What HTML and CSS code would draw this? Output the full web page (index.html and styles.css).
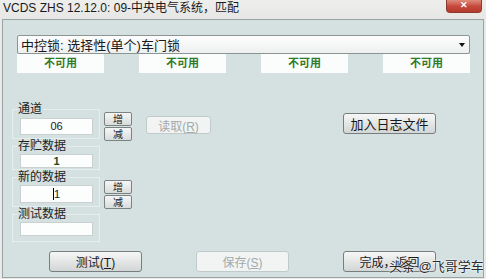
FILE: index.html
```html
<!DOCTYPE html>
<html lang="zh">
<head>
  <meta charset="UTF-8" />
  <title>VCDS ZHS</title>
  <link rel="stylesheet" href="styles.css">
</head>
<body>
  <div id="titleBar">
    <span class="titleText">VCDS ZHS 12.12.0: 09-中央电气系统，匹配</span>
    <div id="closeButton">&#x2715;</div>
  </div>
  <div id="client">
    <div id="combo">
      <span>中控锁: 选择性(单个)车门锁</span>
      <span class="comboArrow"></span>
    </div>
    <div id="statusRow">
      <div class="statusBox">不可用</div>
      <div class="statusBox">不可用</div>
      <div class="statusBox">不可用</div>
      <div class="statusBox">不可用</div>
    </div>

    <div id="middle">
      <div id="groups">
        <fieldset class="group groupChannel">
          <legend>通道</legend>
          <div class="field">06</div>
        </fieldset>
        <fieldset class="group groupStored">
          <legend>存贮数据</legend>
          <div class="field boldValue">1</div>
        </fieldset>
        <fieldset class="group groupNew">
          <legend>新的数据</legend>
          <div class="field"><span class="caret"></span>1</div>
        </fieldset>
        <fieldset class="group groupTest">
          <legend>测试数据</legend>
          <div class="field"></div>
        </fieldset>
      </div>
      <div id="spinColumn">
        <button class="spin up1">增</button>
        <button class="spin down">减</button>
        <button class="spin up2">增</button>
        <button class="spin down">减</button>
      </div>
      <button id="readButton" class="winButton" disabled>读取(<u>R</u>)</button>
      <button id="logButton" class="winButton">加入日志文件</button>
    </div>

    <div id="bottomRow">
      <button class="winButton wide">测试(<u>T</u>)</button>
      <button class="winButton wide" disabled>保存(<u>S</u>)</button>
      <button class="winButton wide">完成，返回</button>
    </div>
    <span id="watermark">头条 @飞哥学车</span>
  </div>
</body>
</html>
```

FILE: styles.css
```css
body {
  margin: 0;
  width: 486px;
  height: 279px;
  overflow: hidden;
  background-color: #e9e9e7;
  font-family: "Liberation Sans", "Noto Sans CJK SC", sans-serif;
  color: #1a1a1a;
}

#titleBar {
  height: 19px;
  display: flex;
  justify-content: space-between;
  align-items: flex-start;
  background: linear-gradient(#eeeeec, #e6e7e5);
}
.titleText {
  font-size: 12px;
  line-height: 17px;
  padding-left: 3px;
}
#closeButton {
  width: 34px;
  height: 12px;
  margin-right: 4px;
  border: 1px solid #8a3b30;
  border-top: none;
  border-radius: 0 0 4px 4px;
  background: linear-gradient(#dd8b7c, #c4473a 55%, #b63a2e);
  color: white;
  font-size: 9px;
  font-weight: bold;
  line-height: 11px;
  text-align: center;
}

#client {
  position: relative;
  box-sizing: border-box;
  width: 482px;
  height: 259px;
  margin-left: 2px;
  border: 1px solid #9aa3a3;
  background-color: #d5e1e1;
  padding-top: 15px;
}

#combo {
  box-sizing: border-box;
  width: 453px;
  height: 19px;
  margin-left: 14px;
  border: 1px solid #8d9494;
  border-radius: 2px;
  background: linear-gradient(#fdfdfd, #eef0f0);
  display: flex;
  justify-content: space-between;
  align-items: center;
  padding: 0 4px 0 3px;
  font-size: 13px;
}
.comboArrow {
  width: 0;
  height: 0;
  border-left: 3px solid transparent;
  border-right: 3px solid transparent;
  border-top: 4px solid #111;
}

#statusRow {
  width: 453px;
  margin-left: 14px;
  display: flex;
  justify-content: space-between;
}
.statusBox {
  width: 87px;
  height: 19px;
  background-color: #fbfdfc;
  color: #2e7a28;
  font-size: 11px;
  font-weight: bold;
  line-height: 19px;
  text-align: center;
}

#middle {
  display: flex;
  align-items: flex-start;
  margin-top: 29px;
  padding-left: 9px;
}

.group {
  width: 88px;
  box-sizing: border-box;
  margin: 0;
  padding: 0 0 0 7px;
  border: 1px solid #e6eded;
}
.group legend {
  padding: 0 1px;
  margin-left: -3px;
  font-size: 12px;
  line-height: 14px;
  color: #222;
}
.field {
  box-sizing: border-box;
  width: 73px;
  border: 1px solid #c8d0d0;
  background-color: #fcfdfd;
  font-size: 11px;
  text-align: center;
}
.groupChannel .field { height: 17px; line-height: 15px; margin-top: 2px; }
.groupChannel { padding-bottom: 3px; }
.groupStored .field { height: 14px; line-height: 12px; margin-top: 1px; }
.groupStored { padding-bottom: 1px; }
.groupNew .field { height: 18px; line-height: 16px; margin-top: 1px; }
.groupNew { padding-bottom: 3px; }
.groupTest .field { height: 14px; margin-top: 1px; }
.groupTest { padding-bottom: 5px; }

.boldValue {
  font-weight: bold;
  color: #244a24;
}
.caret {
  display: inline-block;
  width: 1px;
  height: 12px;
  background-color: #000;
  vertical-align: -2px;
}

#spinColumn {
  display: flex;
  flex-direction: column;
  margin-left: 4px;
}
.spin {
  width: 28px;
  height: 14px;
  padding: 0;
  border: 1px solid #7b8282;
  border-radius: 2px;
  background: linear-gradient(#f6f6f6, #d9dcdc);
  font-family: "Noto Sans CJK SC", sans-serif;
  font-size: 10px;
  line-height: 12px;
  color: #222;
}
.up1 { margin-top: 10px; }
.up2 { margin-top: 39px; }
.down { margin-top: 1px; }

.winButton {
  box-sizing: border-box;
  padding: 0;
  border: 1px solid #777e7e;
  border-radius: 3px;
  background: linear-gradient(#f7f7f7, #e4e6e6 50%, #d3d6d6);
  font-family: "Liberation Sans", "Noto Sans CJK SC", sans-serif;
  font-size: 12px;
  color: #1a1a1a;
}
.winButton:disabled {
  border-color: #c1caca;
  background: #f2f4f4;
  color: #a3a9a9;
}

#readButton {
  width: 65px;
  height: 18px;
  margin: 14px 0 0 14px;
}
#logButton {
  width: 93px;
  height: 21px;
  margin: 11px 47px 0 auto;
  font-size: 13px;
}

#bottomRow {
  display: flex;
  gap: 54px;
  margin-top: 9px;
  padding-left: 46px;
}
.wide {
  width: 93px;
  height: 21px;
}

#watermark {
  position: absolute;
  left: 386px;
  top: 236px;
  font-size: 13px;
  color: #2b2b2b;
  text-shadow: 0 0 2px #fff, 0 0 2px #fff;
  white-space: nowrap;
}
```
